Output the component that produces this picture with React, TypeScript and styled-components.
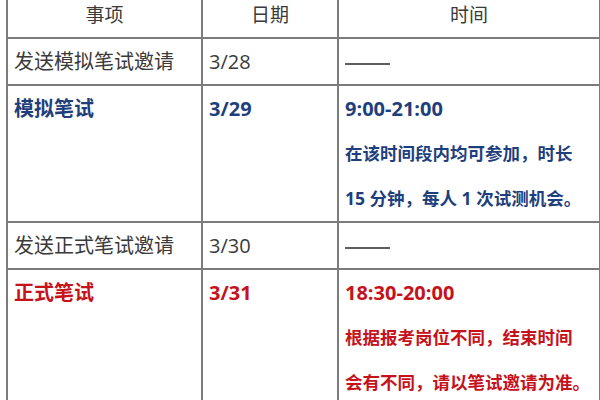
import styled, { createGlobalStyle } from "styled-components";

const GlobalStyle = createGlobalStyle`
  html, body {
    margin: 0;
    padding: 0;
    background: #ffffff;
  }
  body {
    font-family: "Open Sans", "Noto Sans CJK SC", sans-serif;
  }
`;

const Page = styled.div`
  width: 600px;
  height: 400px;
  overflow: hidden;
  background: #ffffff;
`;

const Table = styled.table`
  margin: -11px 0 0 6px;
  width: 587px;
  border-collapse: collapse;
  table-layout: fixed;
`;

const Head = styled.th<{ $w: number }>`
  width: ${(p) => p.$w}px;
  height: 46px;
  padding: 0;
  border: 2px solid #7c7c7c;
  font-size: 19px;
  font-weight: normal;
  color: #3a3a3a;
  text-align: center;
  vertical-align: middle;
`;

const Cell = styled.td<{ $tone?: "plain" | "blue" | "red" }>`
  padding: 0 7px 0 6px;
  border: 2px solid #7c7c7c;
  vertical-align: top;
  text-align: left;
  font-size: 20px;
  line-height: 45px;
  white-space: nowrap;
  font-weight: ${(p) => (p.$tone && p.$tone !== "plain" ? 700 : 400)};
  color: ${(p) =>
    p.$tone === "blue" ? "#1f3f7c" : p.$tone === "red" ? "#c5121b" : "#3a3a3a"};
`;

const Note = styled.div`
  font-size: 17.5px;
  line-height: 45px;
`;

const Dash = styled.span`
  display: inline-block;
  width: 45px;
  height: 0;
  border-top: 2px solid #5e5e5e;
  vertical-align: middle;
`;

export default function App() {
  return (
    <Page>
      <GlobalStyle />
      <Table>
        <thead>
          <tr>
            <Head $w={193}>事项</Head>
            <Head $w={134}>日期</Head>
            <Head $w={260}>时间</Head>
          </tr>
        </thead>
        <tbody>
          <tr>
            <Cell>发送模拟笔试邀请</Cell>
            <Cell>3/28</Cell>
            <Cell>
              <Dash />
            </Cell>
          </tr>
          <tr>
            <Cell $tone="blue">模拟笔试</Cell>
            <Cell $tone="blue">3/29</Cell>
            <Cell $tone="blue">
              9:00-21:00
              <Note>在该时间段内均可参加，时长</Note>
              <Note>15 分钟，每人 1 次试测机会。</Note>
            </Cell>
          </tr>
          <tr>
            <Cell>发送正式笔试邀请</Cell>
            <Cell>3/30</Cell>
            <Cell>
              <Dash />
            </Cell>
          </tr>
          <tr>
            <Cell $tone="red">正式笔试</Cell>
            <Cell $tone="red">3/31</Cell>
            <Cell $tone="red">
              18:30-20:00
              <Note>根据报考岗位不同，结束时间</Note>
              <Note>会有不同，请以笔试邀请为准。</Note>
            </Cell>
          </tr>
        </tbody>
      </Table>
    </Page>
  );
}
